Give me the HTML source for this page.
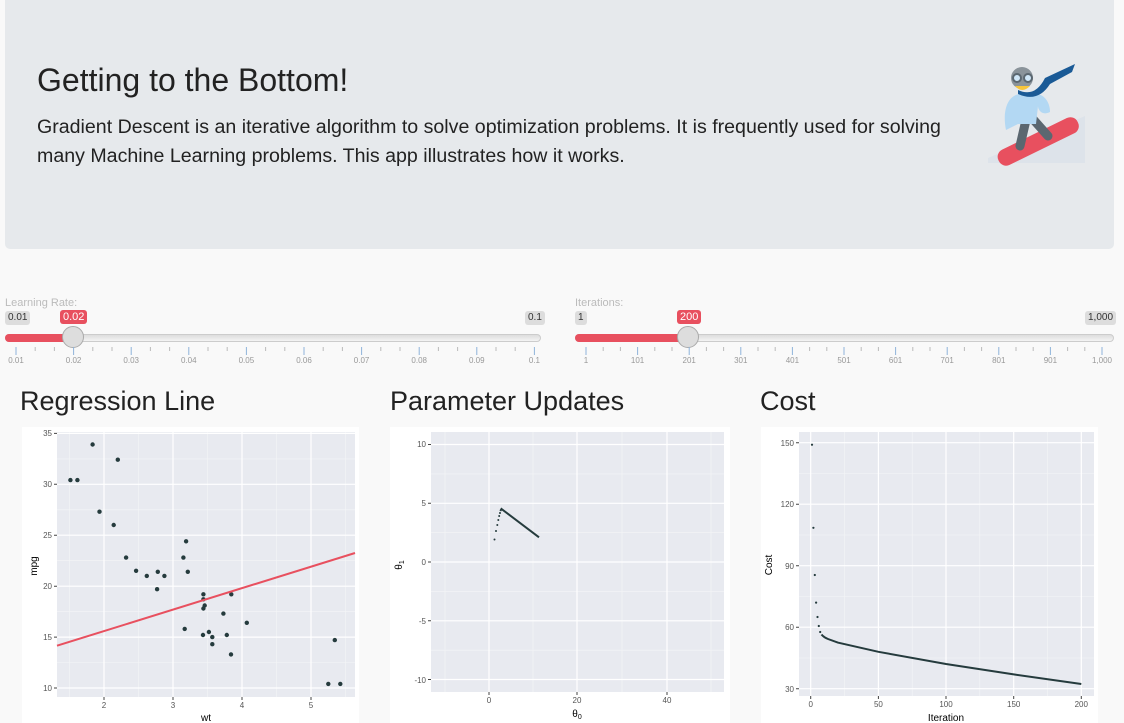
<!DOCTYPE html>
<html><head><meta charset="utf-8"><style>
*{margin:0;padding:0;box-sizing:border-box}
body{width:1124px;height:723px;background:#f9f9f9;font-family:"Liberation Sans",sans-serif;position:relative;overflow:hidden}
.hdr{position:absolute;left:5px;top:0;width:1109px;height:249px;background:#e6e9ec;border-radius:0 0 5px 5px}
.hdr h1{position:absolute;left:32px;top:62px;font-size:32px;font-weight:normal;color:#222}
.hdr p{position:absolute;left:32px;top:113px;width:925px;font-size:19.6px;line-height:29px;color:#222}
.lbl{position:absolute;font-size:11px;color:#bbb}
.pill{position:absolute;font-size:10px;background:#ddd;color:#333;border-radius:3px;padding:1px 3px;line-height:12px}
.pill.r{background:#e8505f;color:#fff;font-size:11px}
.track{position:absolute;height:8px;top:334px;background:linear-gradient(#ddd,#f4f4f4);border:1px solid #ccc;border-radius:4px}
.fill{position:absolute;height:8px;top:334px;background:#e8505f;border-radius:4px 0 0 4px}
.handle{position:absolute;top:326px;width:22px;height:22px;border-radius:50%;background:#ddd;border:1px solid #aaa}
h2{position:absolute;font-size:27px;font-weight:normal;color:#222;top:386px}
</style></head><body>
<div class="hdr"><h1>Getting to the Bottom!</h1>
<p>Gradient Descent is an iterative algorithm to solve optimization problems. It is frequently used for solving many Machine Learning problems. This app illustrates how it works.</p>
<svg style="position:absolute;left:975px;top:58px" width="110" height="110" viewBox="0 0 110 110">
<path d="M8 100 L105 58 L105 105 L8 105Z" fill="#dde3ea"/>
<rect x="14" y="75" width="88" height="17" rx="8" fill="#e8505f" transform="rotate(-26 58 83)"/>
<path d="M46 62 L40 88 M52 60 L68 78" stroke="#5b6770" stroke-width="9" stroke-linecap="round" fill="none"/>
<path d="M26 72 C22 52 28 37 40 36 L58 36 C66 38 70 46 70 54 C62 58 58 52 58 48 L56 66 L38 66 Z" fill="#b3d8f3"/>
<circle cx="42" cy="20" r="11" fill="#8a939a"/>
<circle cx="37" cy="20" r="4" fill="#cfe6f7" stroke="#5b6770" stroke-width="2"/><circle cx="48" cy="20" r="4" fill="#cfe6f7" stroke="#5b6770" stroke-width="2"/>
<path d="M35 28 Q42 36 50 28" fill="#f7c53c"/>
<path d="M38 32 Q55 40 65 20 L95 6 L92 14 L70 26 Q58 45 38 36Z" fill="#1a5a96"/>
</svg></div>

<div class="lbl" style="left:5px;top:297px">Learning Rate:</div>
<div class="pill" style="left:5px;top:311px">0.01</div>
<div class="pill r" style="left:60px;top:310px">0.02</div>
<div class="pill" style="left:525px;top:311px">0.1</div>
<div class="track" style="left:5px;width:536px"></div>
<div class="fill" style="left:5px;width:68px"></div>
<div class="handle" style="left:62px"></div>

<div class="lbl" style="left:575px;top:297px">Iterations:</div>
<div class="pill" style="left:575px;top:311px">1</div>
<div class="pill r" style="left:677px;top:310px">200</div>
<div class="pill" style="left:1085px;top:311px">1,000</div>
<div class="track" style="left:575px;width:539px"></div>
<div class="fill" style="left:575px;width:112px"></div>
<div class="handle" style="left:677px"></div>

<svg style="position:absolute;left:0;top:0" width="1124" height="723">
<g stroke="#8fb4da" stroke-width="1">
<path d="M16 347v8M73.6 347v8M131.2 347v8M188.8 347v8M246.4 347v8M304 347v8M361.6 347v8M419.2 347v8M476.8 347v8M534.4 347v8"/>
<path d="M586 347v8M637.6 347v8M689.2 347v8M740.8 347v8M792.4 347v8M844 347v8M895.6 347v8M947.2 347v8M998.8 347v8M1050.4 347v8M1102 347v8"/>
</g>
<g stroke="#bbb"><path d="M35.2 347v4M54.4 347v4M92.8 347v4M112 347v4M150.4 347v4M169.6 347v4M208 347v4M227.2 347v4M265.6 347v4M284.8 347v4M323.2 347v4M342.4 347v4M380.8 347v4M400 347v4M438.4 347v4M457.6 347v4M496 347v4M515.2 347v4"/>
<path d="M603.2 347v4M620.4 347v4M654.8 347v4M672 347v4M706.4 347v4M723.6 347v4M758 347v4M775.2 347v4M809.6 347v4M826.8 347v4M861.2 347v4M878.4 347v4M912.8 347v4M930 347v4M964.4 347v4M981.6 347v4M1016 347v4M1033.2 347v4M1067.6 347v4M1084.8 347v4"/></g>
<g font-size="8" fill="#999" text-anchor="middle" font-family="Liberation Sans">
<text x="16" y="363">0.01</text><text x="73.6" y="363">0.02</text><text x="131.2" y="363">0.03</text><text x="188.8" y="363">0.04</text><text x="246.4" y="363">0.05</text><text x="304" y="363">0.06</text><text x="361.6" y="363">0.07</text><text x="419.2" y="363">0.08</text><text x="476.8" y="363">0.09</text><text x="534.4" y="363">0.1</text>
<text x="586" y="363">1</text><text x="637.6" y="363">101</text><text x="689.2" y="363">201</text><text x="740.8" y="363">301</text><text x="792.4" y="363">401</text><text x="844" y="363">501</text><text x="895.6" y="363">601</text><text x="947.2" y="363">701</text><text x="998.8" y="363">801</text><text x="1050.4" y="363">901</text><text x="1102" y="363">1,000</text>
</g>

<rect x="22" y="427" width="337" height="300" fill="#fff"/>
<rect x="390" y="427" width="340" height="300" fill="#fff"/>
<rect x="761" y="427" width="337" height="300" fill="#fff"/>

<rect x="57" y="432" width="298" height="265" fill="#e8eaf0"/>
<g stroke="#f4f5f7" stroke-width="0.6"><path d="M69.5 432v265M138.5 432v265M207.5 432v265M276.5 432v265M345.5 432v265M57 662.5h298M57 611.6h298M57 560.7h298M57 509.8h298M57 458.9h298"/></g>
<g stroke="#fff" stroke-width="1.2"><path d="M104 432v265M173 432v265M242 432v265M311 432v265M57 688h298M57 637.1h298M57 586.2h298M57 535.2h298M57 484.3h298M57 433.4h298"/></g>
<g stroke="#444"><path d="M54 688h3M54 637.1h3M54 586.2h3M54 535.2h3M54 484.3h3M54 433.4h3M104 697v3M173 697v3M242 697v3M311 697v3"/></g>
<g font-size="8" fill="#555" font-family="Liberation Sans" text-anchor="end"><text x="52" y="691">10</text><text x="52" y="640">15</text><text x="52" y="589">20</text><text x="52" y="538">25</text><text x="52" y="487">30</text><text x="52" y="436">35</text></g>
<g font-size="8" fill="#555" font-family="Liberation Sans" text-anchor="middle"><text x="104" y="708">2</text><text x="173" y="708">3</text><text x="242" y="708">4</text><text x="311" y="708">5</text></g>
<text x="206" y="721" font-size="10" text-anchor="middle" font-family="Liberation Sans">wt</text>
<text transform="translate(37 566) rotate(-90)" font-size="10" text-anchor="middle" font-family="Liberation Sans">mpg</text>
<g fill="#253b3d">
<circle cx="146.8" cy="575.9" r="2.2"/><circle cx="164.4" cy="575.9" r="2.2"/><circle cx="126.1" cy="557.6" r="2.2"/><circle cx="187.8" cy="571.8" r="2.2"/><circle cx="203.4" cy="599.3" r="2.2"/><circle cx="204.7" cy="605.5" r="2.2"/><circle cx="212.3" cy="644.2" r="2.2"/><circle cx="186.1" cy="541.3" r="2.2"/><circle cx="183.4" cy="557.6" r="2.2"/><circle cx="203.4" cy="594.3" r="2.2"/><circle cx="203.4" cy="608.5" r="2.2"/><circle cx="246.8" cy="622.8" r="2.2"/><circle cx="223.4" cy="613.6" r="2.2"/><circle cx="226.8" cy="635" r="2.2"/><circle cx="328.3" cy="683.9" r="2.2"/><circle cx="340.3" cy="683.9" r="2.2"/><circle cx="334.8" cy="640.1" r="2.2"/><circle cx="117.8" cy="459.7" r="2.2"/><circle cx="77.4" cy="480.1" r="2.2"/><circle cx="92.6" cy="444.5" r="2.2"/><circle cx="136.1" cy="570.8" r="2.2"/><circle cx="208.9" cy="632" r="2.2"/><circle cx="203" cy="635" r="2.2"/><circle cx="231" cy="654.4" r="2.2"/><circle cx="231.3" cy="594.3" r="2.2"/><circle cx="99.5" cy="511.7" r="2.2"/><circle cx="113.7" cy="525" r="2.2"/><circle cx="70.4" cy="480.1" r="2.2"/><circle cx="184.7" cy="628.9" r="2.2"/><circle cx="157.1" cy="589.2" r="2.2"/><circle cx="212.3" cy="637.1" r="2.2"/><circle cx="157.8" cy="571.8" r="2.2"/>
</g>
<path d="M57 645.7L355 553" stroke="#e8505f" stroke-width="2"/>

<rect x="431" y="432" width="293" height="260" fill="#e8eaf0"/>
<g stroke="#f4f5f7" stroke-width="0.6"><path d="M445 432v260M533 432v260M622 432v260M711 432v260M431 473.9h293M431 532.7h293M431 591.4h293M431 650.2h293"/></g>
<g stroke="#fff" stroke-width="1.2"><path d="M489 432v260M577 432v260M667 432v260M431 444.5h293M431 503.3h293M431 562h293M431 620.8h293M431 679.5h293"/></g>
<g stroke="#444"><path d="M428 444.5h3M428 503.3h3M428 562h3M428 620.8h3M428 679.5h3M489 692v3M577 692v3M667 692v3"/></g>
<g font-size="8" fill="#555" font-family="Liberation Sans" text-anchor="end"><text x="426" y="447">10</text><text x="426" y="506">5</text><text x="426" y="565">0</text><text x="426" y="624">-5</text><text x="426" y="683">-10</text></g>
<g font-size="8" fill="#555" font-family="Liberation Sans" text-anchor="middle"><text x="489" y="703">0</text><text x="577" y="703">20</text><text x="667" y="703">40</text></g>
<text x="577" y="717" font-size="10" text-anchor="middle" font-family="Liberation Sans">θ<tspan font-size="7" dy="2">0</tspan></text>
<text transform="translate(402 565) rotate(-90)" font-size="10" text-anchor="middle" font-family="Liberation Sans">θ<tspan font-size="7" dy="2">1</tspan></text>
<g fill="#253b3d"><circle cx="494.5" cy="539.5" r="1"/><circle cx="496" cy="531" r="1"/><circle cx="497.3" cy="525" r="1"/><circle cx="498.3" cy="520" r="1"/><circle cx="499.2" cy="516" r="1"/><circle cx="500" cy="513" r="1"/></g>
<path d="M500.3 511 L501.5 509 L539 537.3" stroke="#253b3d" stroke-width="2" fill="none"/>

<rect x="799" y="432" width="295" height="264" fill="#e8eaf0"/>
<g stroke="#f4f5f7" stroke-width="0.6"><path d="M844.5 432v264M912.2 432v264M979.8 432v264M1047.5 432v264M799 658h295M799 596.5h295M799 535h295M799 473.5h295"/></g>
<g stroke="#fff" stroke-width="1.2"><path d="M810.7 432v264M878.4 432v264M946 432v264M1013.7 432v264M1081.3 432v264M799 688.7h295M799 627.2h295M799 565.7h295M799 504.2h295M799 442.7h295"/></g>
<g stroke="#444"><path d="M796 688.7h3M796 627.2h3M796 565.7h3M796 504.2h3M796 442.7h3M810.7 696v3M878.4 696v3M946 696v3M1013.7 696v3M1081.3 696v3"/></g>
<g font-size="8" fill="#555" font-family="Liberation Sans" text-anchor="end"><text x="794" y="692">30</text><text x="794" y="630">60</text><text x="794" y="569">90</text><text x="794" y="507">120</text><text x="794" y="446">150</text></g>
<g font-size="8" fill="#555" font-family="Liberation Sans" text-anchor="middle"><text x="810.7" y="707">0</text><text x="878.4" y="707">50</text><text x="946" y="707">100</text><text x="1013.7" y="707">150</text><text x="1081.3" y="707">200</text></g>
<text x="946" y="721" font-size="10" text-anchor="middle" font-family="Liberation Sans">Iteration</text>
<text transform="translate(772 565) rotate(-90)" font-size="10" text-anchor="middle" font-family="Liberation Sans">Cost</text>
<g fill="#253b3d"><circle cx="812" cy="444.7" r="1.1"/><circle cx="813.4" cy="527.8" r="1.1"/><circle cx="814.8" cy="575" r="1.1"/><circle cx="816.1" cy="602.6" r="1.1"/><circle cx="817.5" cy="617" r="1.1"/><circle cx="818.8" cy="626" r="1.1"/><circle cx="820.2" cy="632" r="1.1"/></g>
<path d="M821.5 634.5 Q824 637.5 828 639 L837.8 642.6 L878.4 651.8 L946 664 L1013.7 674.4 L1081.3 684" stroke="#253b3d" stroke-width="2" fill="none"/>
</svg>
<h2 style="left:20px">Regression Line</h2>
<h2 style="left:390px">Parameter Updates</h2>
<h2 style="left:760px">Cost</h2>
</body></html>
